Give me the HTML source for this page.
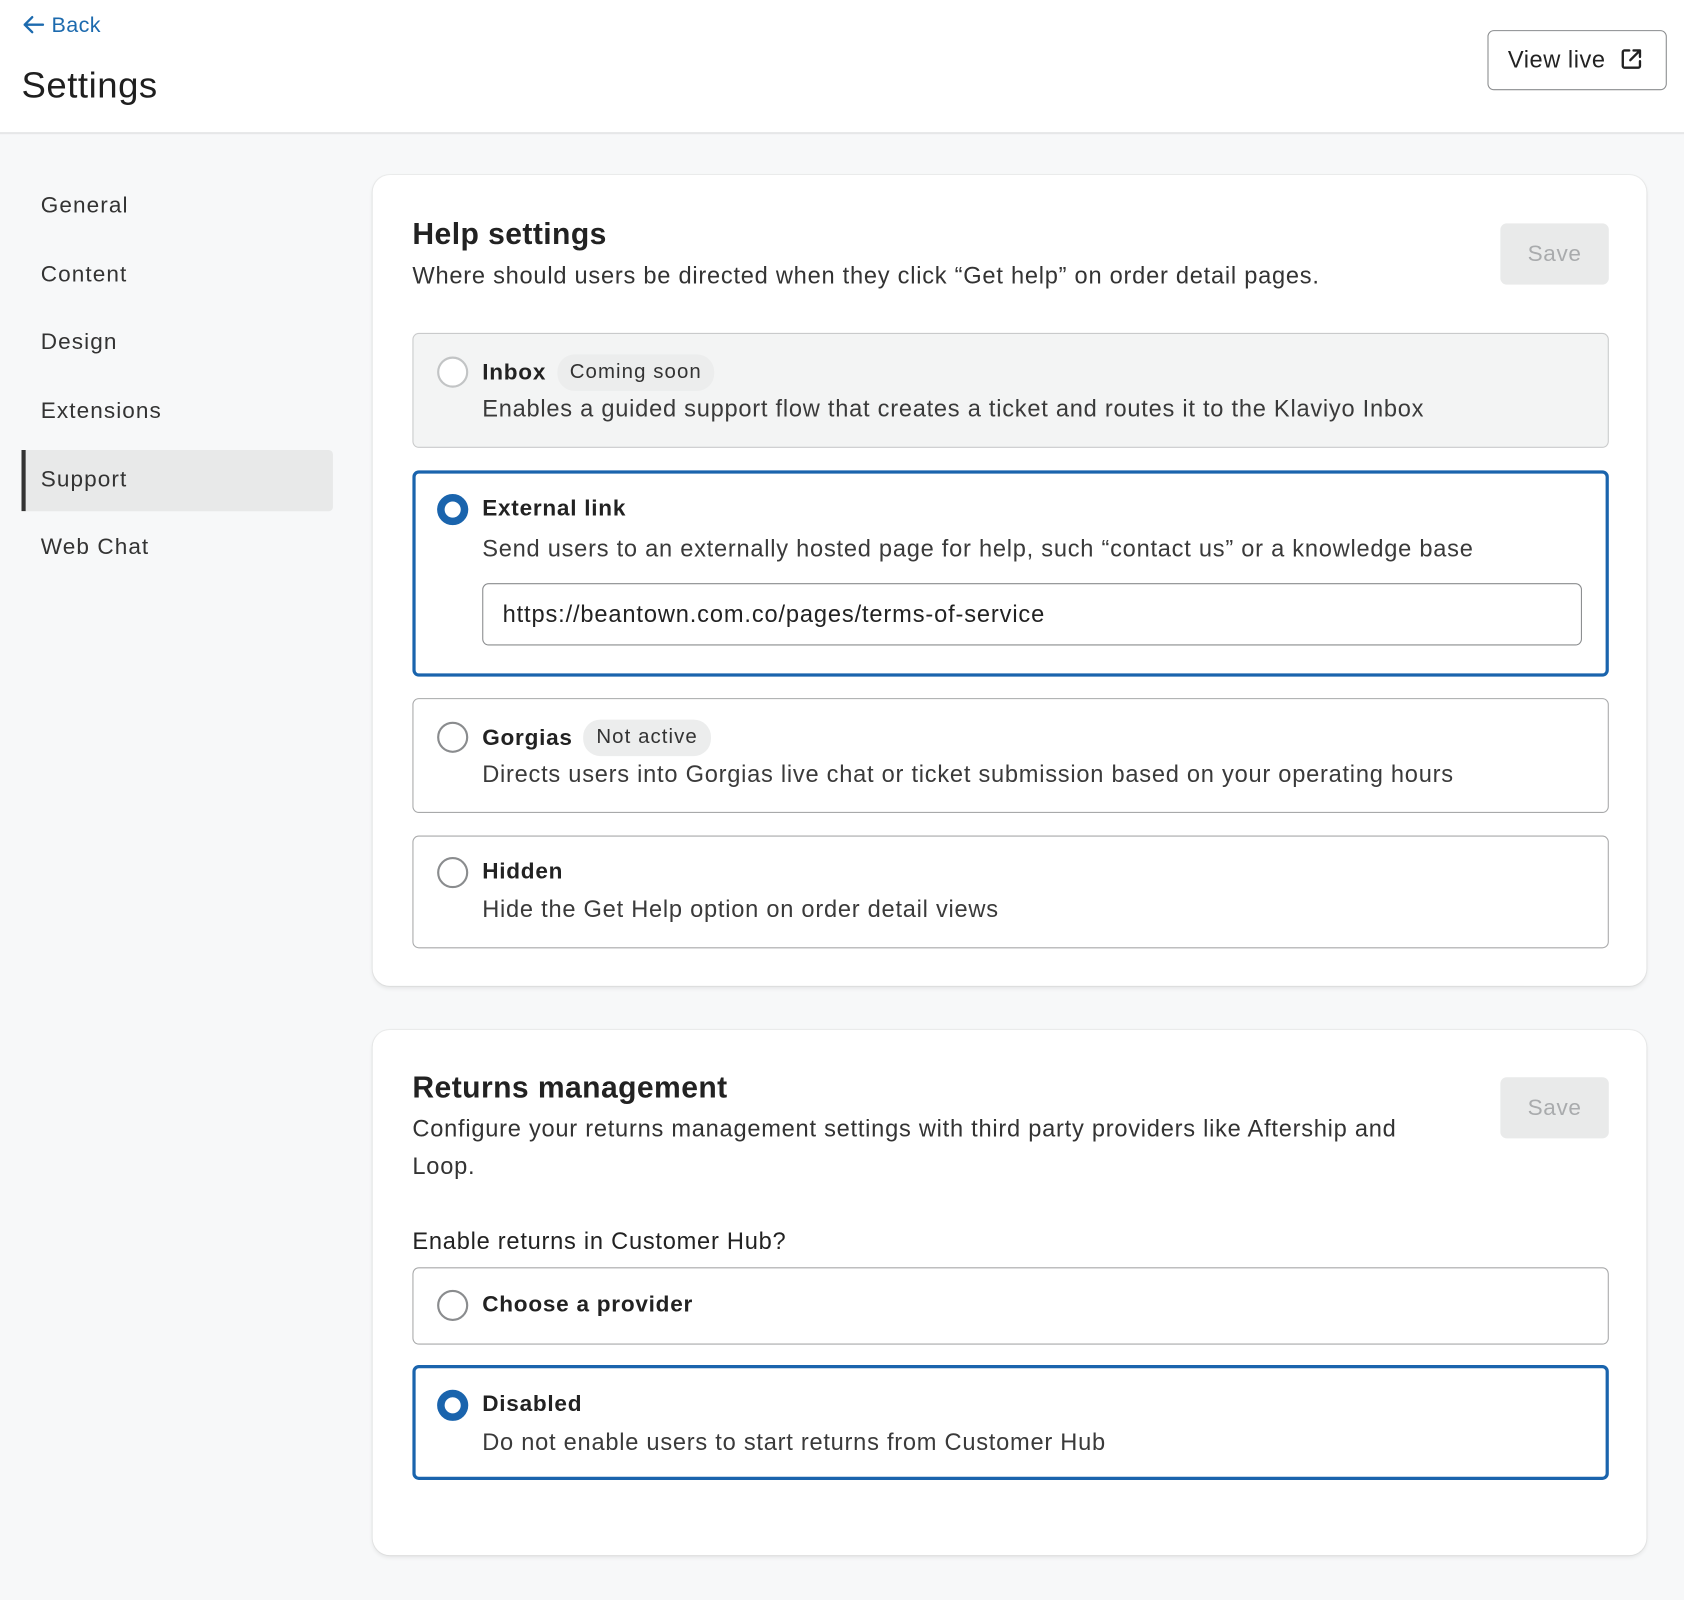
<!DOCTYPE html>
<html><head><meta charset="utf-8"><style>
*{box-sizing:border-box;margin:0;padding:0}
html,body{width:1684px;height:1600px;overflow:hidden;background:#f7f8f9;font-family:"Liberation Sans",Arial,sans-serif;color:#222}
#w{position:absolute;left:0;top:0;width:1568px;height:1490px;transform:scale(1.07398);transform-origin:0 0}
.a{position:absolute;white-space:nowrap}
.hdr{position:absolute;left:0;top:0;width:1568px;height:125px;background:#fff;border-bottom:2px solid #e6e7e8}
.nav{position:absolute;left:38px;font-size:21px;color:#333;line-height:30px;letter-spacing:1px}
.card{position:absolute;left:347px;width:1186px;background:#fff;border-radius:16px;box-shadow:0 2px 4px rgba(0,0,0,.08),0 0 0 1px #eceded}
.save{position:absolute;left:1050px;width:101px;height:57px;background:#e9eaea;border-radius:6px;color:#a9abad;font-size:21px;line-height:57px;text-align:center;letter-spacing:.6px}
.opt{position:absolute;left:37px;width:1114px;border:1.5px solid #a8a9aa;border-radius:6px;background:#fff}
.opt.sel{border:3px solid #1a64ad}
.opt.dis{background:#f3f4f4;border-color:#c9cacb}
.rad{position:absolute;width:29px;height:29px;border-radius:50%;border:2px solid #8a8c8e;background:#fff}
.dis .rad{border-color:#c2c4c5}
.rad.on{border:7px solid #1a64ad}
.t{position:absolute;font-size:21px;font-weight:bold;color:#222;line-height:30px;white-space:nowrap;letter-spacing:.7px}
.d{position:absolute;font-size:22px;color:#3a3a3a;line-height:30px;white-space:nowrap;letter-spacing:.7px}
.pill{display:inline-block;font-weight:normal;background:#eceded;border-radius:16px;padding:0 12px;font-size:19px;line-height:34px;margin-left:10px;color:#333;vertical-align:middle;position:relative;top:-1px;letter-spacing:1px}
h2{position:absolute;font-size:28px;font-weight:bold;color:#222;line-height:36px;white-space:nowrap;letter-spacing:.4px}
</style></head><body><div id="w">
<div class="hdr">
 <div class="a" style="left:20px;top:11px;font-size:20px;color:#1c6aae;line-height:26px;letter-spacing:.4px"><svg width="22" height="18" viewBox="0 0 22 18" style="vertical-align:-2px"><path d="M20 9H3M10 2L3 9l7 7" fill="none" stroke="#1c6aae" stroke-width="2.2" stroke-linecap="round" stroke-linejoin="round"/></svg> Back</div>
 <div class="a" style="left:20px;top:60px;font-size:34px;color:#1f1f1f;line-height:40px;letter-spacing:.5px">Settings</div>
 <div class="a" style="left:1385px;top:28px;width:167px;height:56px;border:1.5px solid #8a8c8e;border-radius:6px;background:#fff;font-size:22px;line-height:53px;padding-left:18px;color:#222;letter-spacing:.5px">View live <svg width="22" height="22" viewBox="0 0 22 22" style="vertical-align:-3px;margin-left:6px"><path d="M9 3H4.5A1.5 1.5 0 0 0 3 4.5v13A1.5 1.5 0 0 0 4.5 19h13a1.5 1.5 0 0 0 1.5-1.5V13M13 3h6v6M19 3l-9 9" fill="none" stroke="#222" stroke-width="2.2" stroke-linecap="round" stroke-linejoin="round"/></svg></div>
</div>
<div class="nav" style="top:177px">General</div>
<div class="nav" style="top:241px">Content</div>
<div class="nav" style="top:304px">Design</div>
<div class="nav" style="top:368px">Extensions</div>
<div class="a" style="left:20px;top:419px;width:290px;height:57px;background:#e8e9e9;border-left:4px solid #333;border-radius:0 4px 4px 0"></div>
<div class="nav" style="top:432px">Support</div>
<div class="nav" style="top:495px">Web Chat</div>

<div class="card" style="top:163px;height:755px">
 <h2 style="left:37px;top:37px">Help settings</h2>
 <div class="d" style="left:37px;top:79px;color:#333">Where should users be directed when they click “Get help” on order detail pages.</div>
 <div class="save" style="top:45px">Save</div>
 <div class="opt dis" style="top:147px;height:107px">
  <div class="rad" style="left:22px;top:21px"></div>
  <div class="t" style="left:64px;top:20px">Inbox<span class="pill">Coming soon</span></div>
  <div class="d" style="left:64px;top:55px">Enables a guided support flow that creates a ticket and routes it to the Klaviyo Inbox</div>
 </div>
 <div class="opt sel" style="top:275px;height:192px">
  <div class="rad on" style="left:20px;top:19px"></div>
  <div class="t" style="left:62px;top:18px">External link</div>
  <div class="d" style="left:62px;top:55px">Send users to an externally hosted page for help, such “contact us” or a knowledge base</div>
  <div class="a" style="left:62px;top:102px;width:1024px;height:58px;border:1.5px solid #8a8c8e;border-radius:6px;font-size:22px;line-height:55px;padding-left:18px;color:#222;letter-spacing:.8px">https://beantown.com.co/pages/terms-of-service</div>
 </div>
 <div class="opt" style="top:487px;height:107px">
  <div class="rad" style="left:22px;top:21px"></div>
  <div class="t" style="left:64px;top:20px">Gorgias<span class="pill">Not active</span></div>
  <div class="d" style="left:64px;top:55px">Directs users into Gorgias live chat or ticket submission based on your operating hours</div>
 </div>
 <div class="opt" style="top:615px;height:105px">
  <div class="rad" style="left:22px;top:19px"></div>
  <div class="t" style="left:64px;top:18px">Hidden</div>
  <div class="d" style="left:64px;top:53px">Hide the Get Help option on order detail views</div>
 </div>
</div>

<div class="card" style="top:959px;height:489px">
 <h2 style="left:37px;top:36px">Returns management</h2>
 <div class="d" style="left:37px;top:74px;color:#333;line-height:35px;white-space:normal;width:960px">Configure your returns management settings with third party providers like Aftership and Loop.</div>
 <div class="save" style="top:44px">Save</div>
 <div class="d" style="left:37px;top:182px;color:#222">Enable returns in Customer Hub?</div>
 <div class="opt" style="top:221px;height:72px">
  <div class="rad" style="left:22px;top:20px"></div>
  <div class="t" style="left:64px;top:19px">Choose a provider</div>
 </div>
 <div class="opt sel" style="top:312px;height:107px">
  <div class="rad on" style="left:20px;top:20px"></div>
  <div class="t" style="left:62px;top:19px">Disabled</div>
  <div class="d" style="left:62px;top:54px">Do not enable users to start returns from Customer Hub</div>
 </div>
</div>
</div></body></html>
